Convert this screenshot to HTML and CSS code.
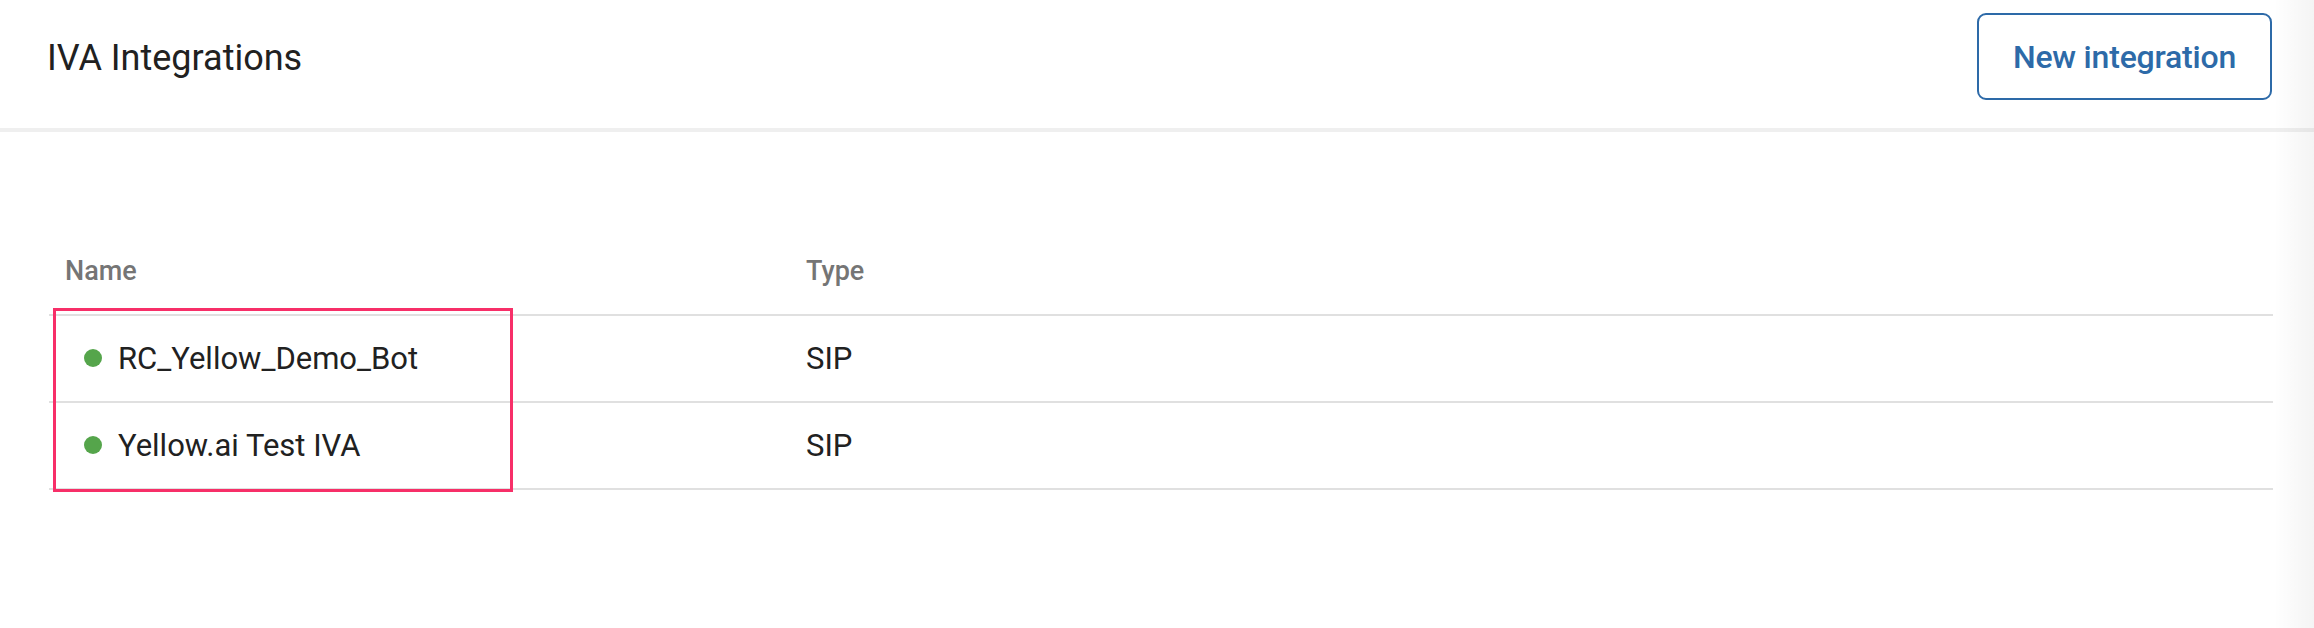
FILE: index.html
```html
<!DOCTYPE html>
<html lang="en">
<head>
<meta charset="utf-8">
<title>IVA Integrations</title>
<link rel="stylesheet" href="styles.css">
</head>
<body>
<div class="page">
  <header class="topbar">
    <h1 class="title">IVA Integrations</h1>
    <button class="btn-outline">New integration</button>
  </header>
  <main class="content">
    <div class="table">
      <div class="row head">
        <div class="cell">Name</div>
        <div class="cell">Type</div>
      </div>
      <div class="row">
        <div class="cell name"><span class="dot"></span>RC_Yellow_Demo_Bot</div>
        <div class="cell">SIP</div>
      </div>
      <div class="row">
        <div class="cell name"><span class="dot"></span>Yellow.ai Test IVA</div>
        <div class="cell">SIP</div>
      </div>
      <div class="highlight"></div>
    </div>
  </main>
  <div class="edge-shade"></div>
</div>
</body>
</html>
```

FILE: styles.css
```css
* { box-sizing: border-box; }

html, body {
  margin: 0;
  padding: 0;
  background: #ffffff;
}

body {
  font-family: Roboto, "Liberation Sans", Arial, sans-serif;
  color: #212121;
}

.page {
  position: relative;
  width: 2314px;
  height: 628px;
  overflow: hidden;
}

.topbar {
  display: flex;
  align-items: center;
  justify-content: space-between;
  height: 132px;
  padding: 0 42px 15px 47px;
  border-bottom: 4px solid #efefef;
}

.title {
  margin: 0;
  padding-top: 3px;
  font-size: 36px;
  font-weight: 400;
  line-height: 40px;
  color: #212121;
}

.btn-outline {
  height: 87px;
  width: 295px;
  padding: 0;
  border: 2px solid #2d6aa8;
  border-radius: 9px;
  background: #ffffff;
  color: #2d6aa8;
  font-family: Roboto, "Liberation Sans", Arial, sans-serif;
  font-size: 32px;
  font-weight: 500;
  letter-spacing: -0.2px;
}

.content {
  padding: 124px 41px 0 49px;
}

.table {
  position: relative;
}

.row {
  display: grid;
  grid-template-columns: 741px 1fr;
  align-items: center;
  height: 87px;
  border-bottom: 2px solid #e0e0e0;
}

.row.head {
  height: 60px;
  align-items: start;
  padding-bottom: 28px;
}

.row.head .cell {
  font-size: 27px;
  font-weight: 500;
  line-height: 30px;
  color: #757575;
}

.cell {
  padding-left: 16px;
  font-size: 31px;
  line-height: 36px;
  color: #212121;
}

.cell.name {
  display: flex;
  align-items: center;
}

.dot {
  width: 18px;
  height: 18px;
  border-radius: 50%;
  background: #55a54b;
  margin-left: 19px;
  margin-right: 16px;
  margin-top: -2px;
  flex: none;
}

.highlight {
  position: absolute;
  left: 4px;
  top: 52px;
  width: 460px;
  height: 184px;
  border: 3px solid #f72f68;
  pointer-events: none;
}

.edge-shade {
  position: absolute;
  top: 0;
  right: 0;
  width: 40px;
  height: 100%;
  background: linear-gradient(to right, rgba(0, 0, 0, 0), rgba(0, 0, 0, 0.045));
  pointer-events: none;
}
```
